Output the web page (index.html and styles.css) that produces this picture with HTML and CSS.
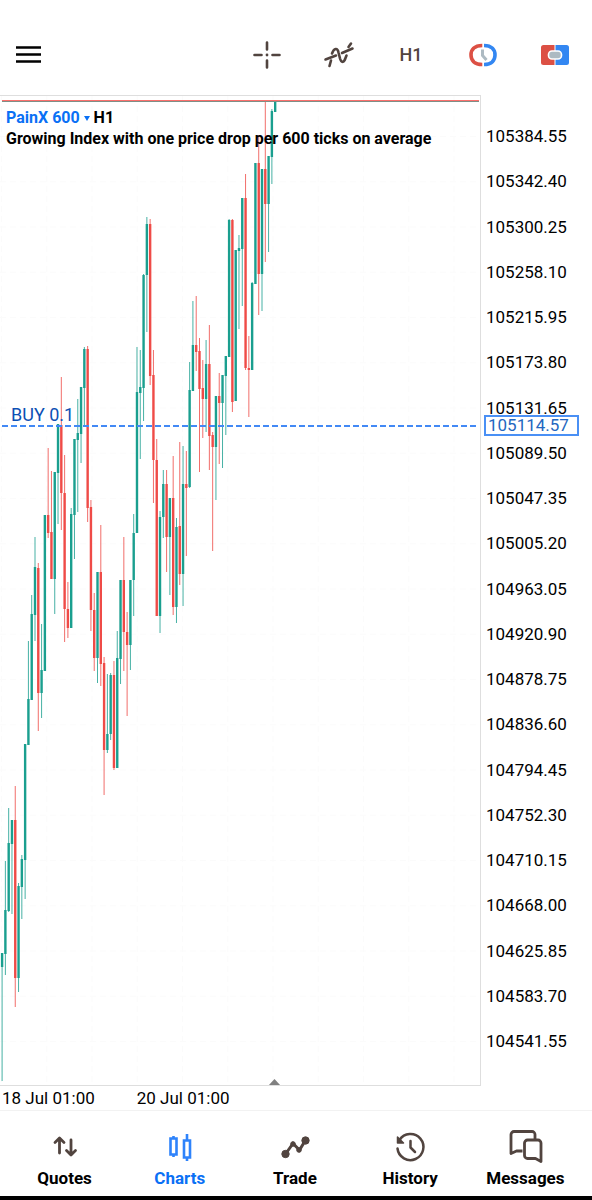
FILE: index.html
```html
<!DOCTYPE html>
<html lang="en">
<head>
    <meta charset="UTF-8">
    <meta name="viewport" content="width=device-width, initial-scale=1">
    <title>PainX 600 H1</title>
    <link rel="stylesheet" href="styles.css">
</head>
<body>
<header class="toolbar">
    <button class="menu" aria-label="Menu">
        <svg width="26" height="20" viewBox="0 0 26 20"><path d="M0 2.5h25M0 9.5h25M0 16.5h25" stroke="#000" stroke-width="2.6"/></svg>
    </button>
    <div class="tools">
        <button aria-label="Crosshair">
            <svg width="30" height="30" viewBox="0 0 30 30" stroke="#51443f" stroke-width="2.6" stroke-linecap="round">
                <path d="M15 2.5v7M15 20.5v7M2.5 15h7M20.5 15h7"/>
                <circle cx="15" cy="15" r="1.4" fill="#51443f" stroke="none"/>
            </svg>
        </button>
        <button aria-label="Indicators">
            <svg width="32" height="28" viewBox="0 0 32 28" fill="none" stroke="#51443f" stroke-width="2.6" stroke-linecap="round">
                <path d="M2.5 18.5L13 14.5M19 12L29.5 7.5"/>
                <path d="M6.5 25L8 19.5M9 12.5C11 7 14.5 6.5 15.5 11.5L17 17.5C18.5 22.5 21 21.5 22.5 17L23.5 14.5M25.5 6L28 2.5"/>
            </svg>
        </button>
        <button class="period" aria-label="Timeframe H1">H1</button>
        <button aria-label="Trading sessions">
            <svg width="30" height="26" viewBox="0 0 30 26" fill="none">
                <path d="M14.3 3.5C6 3.500 3 8 3 13s3 9.500 11.300 9.500" stroke="#dc5044" stroke-width="3.600"/>
                <path d="M16 3.500c8 0 11 4.500 11 9.500s-3 9.500-11 9.500" stroke="#3387f2" stroke-width="3.600"/>
                <path d="M14.500 7.500v6l4 4.500" stroke="#adbac2" stroke-width="3"/>
            </svg>
        </button>
        <button aria-label="One click trading">
            <svg width="30" height="22" viewBox="0 0 30 22">
                <path d="M3.500 1H14.500V21H3.500a2.500 2.500 0 0 1-2.500-2.500v-15A2.500 2.500 0 0 1 3.500 1z" fill="#dc5044"/>
                <path d="M15.500 1H26.500a2.500 2.500 0 0 1 2.500 2.500v15a2.500 2.500 0 0 1-2.500 2.500H15.500z" fill="#3387f2"/>
                <rect x="8.500" y="7" width="13" height="8" rx="3.500" fill="#adbac2" stroke="#fff" stroke-width="1.600"/>
            </svg>
        </button>
    </div>
</header>

<main>
    <div class="chart">
        <div class="plot">
            <svg id="candles" viewBox="0 96 480 989" role="img" aria-label="PainX 600 hourly candles"></svg>
            <div class="symbol">
                <div><a href="#">PainX 600 <span class="arrow"></span></a> H1</div>
                <div>Growing Index with one price drop per 600 ticks on average</div>
            </div>
        </div>
        <div class="scale">
            <ul>
                <li>105384.55</li>
                <li>105342.40</li>
                <li>105300.25</li>
                <li>105258.10</li>
                <li>105215.95</li>
                <li>105173.80</li>
                <li>105131.65</li>
                <li>105089.50</li>
                <li>105047.35</li>
                <li>105005.20</li>
                <li>104963.05</li>
                <li>104920.90</li>
                <li>104878.75</li>
                <li>104836.60</li>
                <li>104794.45</li>
                <li>104752.30</li>
                <li>104710.15</li>
                <li>104668.00</li>
                <li>104625.85</li>
                <li>104583.70</li>
                <li>104541.55</li>
            </ul>
            <span class="tag">105114.57</span>
        </div>
    </div>
    <div class="dates">
        <span>18 Jul 01:00</span>
        <span>20 Jul 01:00</span>
    </div>
</main>

<nav class="tabs">
    <a href="#">
        <svg width="36" height="36" viewBox="0 0 36 36" fill="none" stroke="#51443f" stroke-width="2.8" stroke-linecap="round" stroke-linejoin="round">
            <path d="M12.5 25V10.5M8 14.5l4.5-4.5L17 14.5M24 12v14M19.5 22.5L24 27l4.5-4.5"/>
        </svg>
        Quotes
    </a>
    <a href="#" class="active">
        <svg width="36" height="36" viewBox="0 0 36 36" fill="none" stroke="#2e83fb" stroke-width="2.6">
            <path d="M8.5 10.5h6v16h-6zM11.5 8v2M11.5 26.5v2.5M22 12.5h6v17h-6zM25 6v6M25 29.5v3.5"/>
        </svg>
        Charts
    </a>
    <a href="#">
        <svg width="36" height="36" viewBox="0 0 36 36" fill="#51443f" stroke="#51443f">
            <path d="M8.5 26L16 15.5L22.5 22L28 13" fill="none" stroke-width="3"/>
            <circle cx="8.5" cy="26" r="3.7"/><circle cx="16" cy="16" r="2.3"/>
            <circle cx="22" cy="22" r="2.3"/><circle cx="28.5" cy="12.5" r="3.7"/>
        </svg>
        Trade
    </a>
    <a href="#">
        <svg width="36" height="36" viewBox="0 0 36 36" fill="none" stroke="#51443f" stroke-width="2.5" stroke-linecap="round" stroke-linejoin="round">
            <path d="M5.5 20.5A13 13 0 1 0 7.5 12"/>
            <path d="M5.5 9v6h6z" fill="#51443f" stroke-width="1.5"/>
            <path d="M18.5 13v6.5l4.5 4.5"/>
        </svg>
        History
    </a>
    <a href="#">
        <svg width="36" height="36" viewBox="0 0 36 36" fill="none" stroke="#51443f" stroke-width="2.8" stroke-linejoin="round">
            <path d="M15.5 23H9.5L4 25.5V6.5a3 3 0 0 1 3-3H25a3 3 0 0 1 3 3V11"/>
            <path d="M20.5 12H31a3 3 0 0 1 3 3V33.5L28.5 30.5H20.5a3 3 0 0 1-3-3V15a3 3 0 0 1 3-3z"/>
        </svg>
        Messages
    </a>
</nav>

<script src="chart.js"></script>
</body>
</html>
```

FILE: styles.css
```css
* {
    box-sizing: border-box;
}
body {
    margin: 0;
    min-height: 100vh;
    display: flex;
    flex-direction: column;
    background: #fff;
    color: #000;
    font-family: Roboto, sans-serif;
    font-size: 17px;
    border-bottom: 4px solid #000;
}
button {
    border: 0;
    padding: 0;
    background: none;
    font: inherit;
    cursor: pointer;
}
a {
    color: inherit;
    text-decoration: none;
}
svg {
    display: block;
}

/* top bar */
.toolbar {
    display: flex;
    justify-content: space-between;
    align-items: center;
    height: 95px;
    padding: 14px 1px 0 16px;
}
.tools {
    display: flex;
}
.tools button {
    display: flex;
    justify-content: center;
    align-items: center;
    width: 72px;
    height: 48px;
}
.tools .period {
    color: #51443f;
    font-size: 18px;
    font-weight: 500;
}

/* chart */
.chart {
    display: flex;
}
.plot {
    position: relative;
    flex: 1;
    border: 1px solid #dedede;
    border-left: 0;
}
#candles {
    width: 100%;
    height: auto;
}
.symbol {
    position: absolute;
    left: 6px;
    top: 11px;
    font-size: 16px;
    font-weight: 700;
    line-height: 21px;
}
.symbol a {
    color: #0a70f5;
}
.arrow {
    display: inline-block;
    vertical-align: middle;
    border: 3px solid transparent;
    border-top: 5px solid #0a70f5;
    border-bottom: 0;
}
.scale {
    position: relative;
    width: 111px;
    padding: 31px 0 35px 5px;
}
.scale ul {
    display: flex;
    flex-direction: column;
    justify-content: space-between;
    height: 100%;
    margin: 0;
    padding: 0;
    list-style: none;
    line-height: 20px;
}
.tag {
    position: absolute;
    left: 3px;
    top: 32.3%;
    width: 95px;
    padding-left: 2px;
    border: 2px solid #4a90f5;
    background: #fff;
    color: #2467c0;
    line-height: 17px;
}
.dates {
    display: flex;
    gap: 42px;
    padding: 2px 2px 1px;
    line-height: 21px;
}

.grid {
    stroke: #fbfbfb;
    stroke-dasharray: 6 4;
}
.up {
    stroke: #1a9f8f;
}
.down {
    stroke: #ef4b47;
}
.body {
    stroke-width: 2.4px;
}
.wick {
    stroke-width: 1px;
    opacity: 0.8;
}
.bid {
    stroke: #7f8f87;
}
.ask {
    stroke: #fb6f6c;
}
.order {
    stroke: #4289f5;
    stroke-width: 2px;
    stroke-dasharray: 6 3;
}
.order-text {
    fill: #0d50b4;
    font-size: 18px;
}
.marker {
    fill: #808080;
}

/* bottom navigation */
.tabs {
    display: grid;
    grid-template-columns: repeat(5, 1fr);
    flex: 1;
    padding: 17px 9px 0 7px;
    border-top: 1px solid #f2f2f2;
}
.tabs a {
    display: flex;
    flex-direction: column;
    align-items: center;
    gap: 2px;
    font-size: 17px;
    font-weight: 700;
    line-height: 24px;
}
.tabs .active {
    color: #0a70f5;
}
```

FILE: chart.js
```js
// each candle: direction, body top, body bottom, wick top, wick bottom
var candles = [
    ["up", 953, 967, 953, 1081], ["up", 910, 954, 861, 975], ["up", 843, 911, 808, 912],
    ["up", 820, 844, 820, 914], ["down", 820, 978, 786, 1007], ["up", 886, 978, 883, 992],
    ["up", 859, 887, 855, 919], ["up", 744, 860, 744, 899], ["up", 699, 745, 641, 745],
    ["up", 614, 700, 595, 700], ["up", 567, 615, 537, 641], ["down", 568, 693, 563, 731],
    ["up", 670, 693, 624, 718], ["up", 515, 671, 515, 671], ["down", 515, 533, 448, 538],
    ["down", 532, 579, 471, 579], ["up", 472, 579, 472, 614], ["up", 424, 473, 424, 524],
    ["down", 425, 493, 377, 530], ["down", 493, 609, 455, 642], ["down", 609, 628, 582, 638],
    ["up", 514, 628, 508, 628], ["up", 439, 515, 439, 559], ["up", 433, 440, 399, 512],
    ["up", 387, 434, 387, 463], ["up", 349, 388, 347, 425], ["down", 349, 508, 346, 522],
    ["down", 507, 610, 500, 631], ["down", 610, 658, 593, 671], ["up", 572, 658, 572, 683],
    ["down", 572, 664, 525, 686], ["down", 663, 750, 657, 795], ["up", 734, 750, 674, 753],
    ["up", 675, 734, 673, 740], ["down", 675, 768, 661, 770], ["up", 658, 768, 631, 768],
    ["up", 580, 659, 580, 684], ["down", 580, 632, 537, 671], ["down", 632, 645, 612, 716],
    ["up", 580, 645, 580, 670], ["up", 533, 580, 514, 616], ["up", 392, 533, 347, 533],
    ["up", 387, 393, 350, 459], ["up", 275, 388, 274, 421], ["up", 224, 275, 217, 332],
    ["down", 224, 376, 219, 385], ["down", 375, 460, 350, 503], ["down", 460, 616, 439, 616],
    ["up", 517, 616, 511, 633], ["up", 484, 517, 470, 538], ["down", 484, 537, 470, 572],
    ["up", 498, 537, 498, 595], ["down", 498, 607, 456, 615], ["up", 527, 607, 518, 623],
    ["down", 526, 574, 442, 585], ["up", 484, 574, 446, 606], ["down", 484, 488, 451, 556],
    ["up", 390, 487, 362, 488], ["up", 345, 391, 301, 391], ["down", 345, 352, 296, 371],
    ["down", 351, 389, 338, 472], ["down", 388, 399, 360, 438], ["up", 364, 399, 340, 432],
    ["down", 364, 436, 325, 470], ["down", 435, 447, 432, 551], ["up", 396, 447, 396, 500],
    ["down", 396, 403, 373, 464], ["up", 375, 403, 375, 468], ["up", 356, 376, 356, 435],
    ["up", 220, 357, 219, 357], ["down", 220, 402, 219, 412], ["up", 250, 401, 250, 401],
    ["up", 248, 251, 235, 329], ["up", 198, 249, 198, 306], ["down", 198, 368, 174, 370],
    ["down", 368, 370, 336, 417], ["up", 283, 370, 282, 370], ["up", 163, 284, 163, 284],
    ["down", 163, 274, 135, 315], ["up", 169, 274, 169, 311], ["down", 169, 204, 102, 262],
    ["up", 156, 204, 156, 252], ["up", 111, 157, 109, 184], ["up", 102, 112, 102, 112]
];

var svg = document.getElementById("candles");
var step = 3.29;
var out = "";

function line(cls, x1, y1, x2, y2) {
    return `<line class="${cls}" x1="${x1}" y1="${y1}" x2="${x2}" y2="${y2}"/>`;
}

// grid
for (var i = 0; i < 11; i++) {
    out += line("grid", 1.5 + i * 45.25, 96, 1.5 + i * 45.25, 1085);
}
for (var j = 0; j < 21; j++) {
    out += line("grid", 0, 136.5 + j * 45.25, 480, 136.5 + j * 45.25);
}

candles.forEach(function (c, n) {
    var x = (2.1 + n * step).toFixed(2);
    out += line("wick " + c[0], x, c[3], x, c[4]);
    out += line("body " + c[0], x, c[1], x, c[2]);
});

// bid and ask sit right next to each other
out += line("bid", 2, 101.5, 479, 101.5);
out += line("ask", 2, 100.5, 479, 100.5);
out += line("order", 2, 426, 479, 426);
out += `<text class="order-text" x="11" y="421">BUY 0.1</text>`;
out += `<path class="marker" d="M268 1086l6.5-7 6.5 7z"/>`;

svg.innerHTML = out;
```
